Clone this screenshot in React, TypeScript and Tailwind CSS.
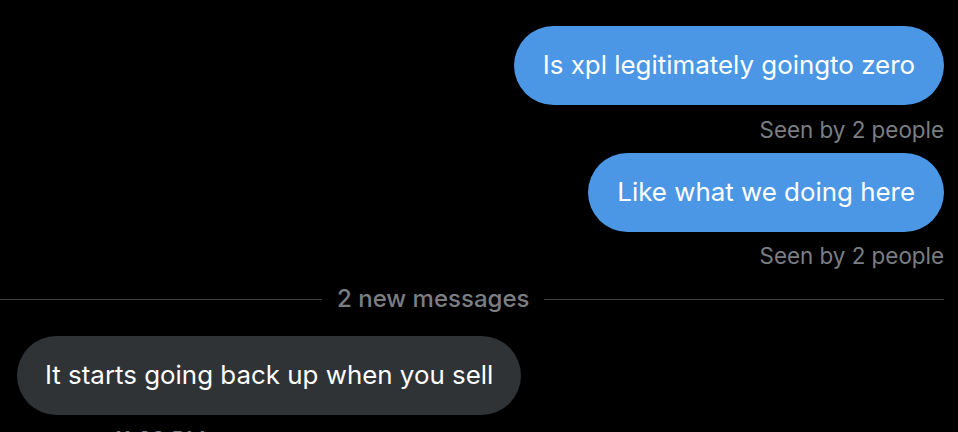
export default function App() {
  const font = { fontFamily: "Inter, 'Noto Sans', sans-serif" };
  return (
    <div
      className="w-[958px] h-[432px] overflow-hidden bg-black text-white"
      style={font}
    >
      <div className="flex flex-col pt-[26px] pr-[14px]">
        {/* Outgoing */}
        <div className="flex justify-end">
          <div className="h-[79px] flex items-center px-[29px] rounded-full bg-[#4b97e6] text-[25.9px]">
            Is xpl legitimately goingto zero
          </div>
        </div>
        <div className="flex justify-end mt-[12px] mb-[10px] text-[22.4px] leading-[26px] text-[#7a7e83]">
          Seen by 2 people
        </div>
        <div className="flex justify-end">
          <div className="h-[79px] flex items-center px-[29px] rounded-full bg-[#4b97e6] text-[25.9px]">
            Like what we doing here
          </div>
        </div>
        <div className="flex justify-end mt-[11px] text-[22.4px] leading-[26px] text-[#7a7e83]">
          Seen by 2 people
        </div>

        {/* Divider */}
        <div className="flex items-center gap-[15px] mt-[17px] h-[26px]">
          <div className="w-[322px] h-px bg-[#3e4144]" />
          <span className="text-[24px] font-medium text-[#7a7e83] leading-[26px]">
            2 new messages
          </span>
          <div className="flex-1 h-px bg-[#3e4144]" />
        </div>

        {/* Incoming */}
        <div className="flex justify-start pl-[17px] mt-[24px]">
          <div className="h-[79px] flex items-center px-[28px] rounded-full bg-[#2f3336] text-[25.9px]">
            It starts going back up when you sell
          </div>
        </div>
        <div className="pl-[113px] mt-[12px] text-[22.4px] leading-[26px] text-[#7a7e83]">
          11:32 PM
        </div>
      </div>
    </div>
  );
}
